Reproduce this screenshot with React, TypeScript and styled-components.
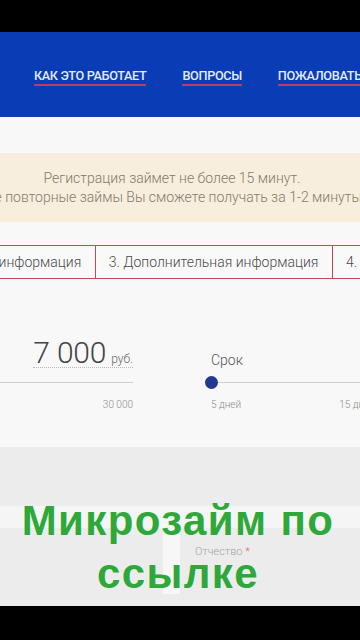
import styled, { createGlobalStyle } from "styled-components";

const GlobalStyle = createGlobalStyle`
  html, body {
    margin: 0;
    padding: 0;
    background: #000;
  }
  body {
    font-family: Roboto, "Liberation Sans", sans-serif;
  }
`;

const Screen = styled.div`
  position: relative;
  width: 360px;
  height: 640px;
  overflow: hidden;
  display: flex;
  flex-direction: column;
  background: #000;
`;

const BlackBar = styled.div<{ $h: number }>`
  height: ${(p) => p.$h}px;
  flex: none;
  background: #000;
`;

const Header = styled.header`
  height: 85px;
  flex: none;
  background: #0a3db5;
  display: flex;
  align-items: flex-start;
  padding-top: 36px;
  box-sizing: border-box;
  white-space: nowrap;
  overflow: hidden;
`;

const Nav = styled.nav`
  display: flex;
  gap: 36px;
  margin-left: -38px;
`;

const NavLink = styled.a`
  font-size: 12.7px;
  font-weight: 500;
  letter-spacing: -0.35px;
  color: #e3ebff;
  text-decoration: none;
  padding-bottom: 1px;
  border-bottom: 2px solid #c23a62;
`;

const Page = styled.main`
  flex: none;
  height: 330px;
  background: #f8f8f8;
  padding-top: 36px;
  box-sizing: border-box;
  overflow: hidden;
`;

const Notice = styled.div`
  height: 69px;
  background: #f8eedd;
  display: flex;
  justify-content: center;
  overflow: hidden;
`;

const NoticeText = styled.div`
  flex: none;
  width: 420px;
  margin-left: -16px;
  padding-top: 16px;
  text-align: center;
  font-size: 14px;
  font-weight: 300;
  line-height: 19px;
  color: #847b6b;
`;

const Tabs = styled.div`
  margin-top: 23px;
  display: flex;
  white-space: nowrap;
  margin-left: -80px;
`;

const Tab = styled.div`
  flex: none;
  height: 34px;
  box-sizing: border-box;
  padding: 0 14px 0 13px;
  display: flex;
  align-items: center;
  border: 1.5px solid #bf4b52;
  margin-left: -1.5px;
  background: #f9f9f9;
  font-size: 14px;
  font-weight: 300;
  color: #4a4a4a;
`;

const Calc = styled.div`
  display: flex;
  gap: 78px;
  padding-top: 59px;
`;

const Column = styled.div<{ $w: number }>`
  flex: none;
  width: ${(p) => p.$w}px;
  display: flex;
  flex-direction: column;
`;

const AmountRow = styled.div`
  align-self: flex-end;
  display: flex;
  align-items: baseline;
  gap: 5px;
  border-bottom: 1px dotted #b8b8b8;
`;

const Amount = styled.span`
  font-size: 30px;
  font-weight: 300;
  line-height: 29px;
  color: #444;
  letter-spacing: -0.2px;
`;

const Currency = styled.span`
  font-size: 12px;
  font-weight: 300;
  color: #666;
`;

const Caption = styled.div`
  height: 31px;
  display: flex;
  align-items: flex-end;
  padding-bottom: 1px;
  box-sizing: border-box;
  font-size: 14px;
  font-weight: 300;
  color: #555;
`;

const Track = styled.div<{ $gap: number }>`
  position: relative;
  height: 1px;
  margin-top: ${(p) => p.$gap}px;
  background: #cfcfcf;
`;

const Knob = styled.div`
  position: absolute;
  left: -6px;
  top: -6px;
  width: 13px;
  height: 13px;
  border-radius: 50%;
  background: #23388f;
`;

const Scale = styled.div<{ $end?: boolean }>`
  margin-top: 16px;
  display: flex;
  justify-content: ${(p) => (p.$end ? "flex-end" : "space-between")};
  font-size: 10px;
  font-weight: 300;
  color: #8c8c8c;
  white-space: nowrap;
`;

const FormArea = styled.section`
  flex: none;
  height: 159px;
  background: #ececec;
  display: flex;
  flex-direction: column;
  padding-top: 59px;
  box-sizing: border-box;
`;

const Strip = styled.div`
  height: 22px;
  background: #f5f5f5;
`;

const FieldRow = styled.div`
  display: flex;
  height: 66px;
  background: #f7f7f7;
`;

const Field = styled.div<{ $w?: number }>`
  flex: ${(p) => (p.$w ? "none" : "1")};
  width: ${(p) => (p.$w ? `${p.$w}px` : "auto")};
  background: #ececec;
  padding: 17px 0 0 15px;
  box-sizing: border-box;
  font-size: 11px;
  font-weight: 300;
  color: #a5a5a5;
  & + & {
    margin-left: 17px;
  }
`;

const Star = styled.span`
  color: #e07070;
`;

const Overlay = styled.div`
  position: absolute;
  left: 0;
  right: 0;
  top: 494px;
  text-align: center;
  font-family: "Liberation Sans", Arial, sans-serif;
  font-weight: 700;
  font-size: 42px;
  letter-spacing: 1.4px;
  line-height: 53px;
  color: #2fa83a;
  padding-right: 4px;
`;

export default function App() {
  return (
    <Screen>
      <GlobalStyle />
      <BlackBar $h={32} />
      <Header>
        <Nav>
          <NavLink>О НАС</NavLink>
          <NavLink>КАК ЭТО РАБОТАЕТ</NavLink>
          <NavLink>ВОПРОСЫ</NavLink>
          <NavLink>ПОЖАЛОВАТЬСЯ</NavLink>
        </Nav>
      </Header>
      <Page>
        <Notice>
          <NoticeText>
            Регистрация займет не более 15 минут.
            <br />
            Все повторные займы Вы сможете получать за 1-2 минуты.
          </NoticeText>
        </Notice>
        <Tabs>
          <Tab>2. Личная информация</Tab>
          <Tab>3. Дополнительная информация</Tab>
          <Tab>4. Подтверждение</Tab>
        </Tabs>
        <Calc>
          <Column $w={133}>
            <AmountRow>
              <Amount>7 000</Amount>
              <Currency>руб.</Currency>
            </AmountRow>
            <Track $gap={14} />
            <Scale $end>
              <span>30 000</span>
            </Scale>
          </Column>
          <Column $w={164}>
            <Caption>Срок</Caption>
            <Track $gap={13}>
              <Knob />
            </Track>
            <Scale>
              <span>5 дней</span>
              <span>15 дней</span>
            </Scale>
          </Column>
        </Calc>
      </Page>
      <FormArea>
        <Strip />
        <FieldRow>
          <Field $w={163} />
          <Field>
            Отчество <Star>*</Star>
          </Field>
        </FieldRow>
      </FormArea>
      <BlackBar $h={34} />
      <Overlay>
        Микрозайм по
        <br />
        ссылке
      </Overlay>
    </Screen>
  );
}
